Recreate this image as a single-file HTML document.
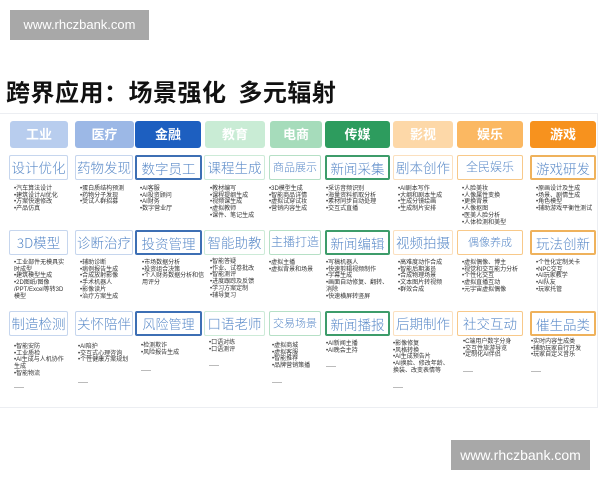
<!DOCTYPE html>
<html><head><meta charset="utf-8"><style>
*{margin:0;padding:0;box-sizing:border-box}
body{width:600px;height:480px;background:#fff;position:relative;overflow:hidden;font-family:"Liberation Sans","Noto Sans CJK SC",sans-serif}
.wm{position:absolute;background:#a8a8a8;color:#fff;font-size:13px;text-align:center;line-height:30px}
.title{position:absolute;left:6px;top:73px;font-size:24px;font-weight:bold;color:#111;letter-spacing:0.5px;font-family:"Noto Sans CJK SC",sans-serif}
.panel{position:absolute;left:0;top:113px;width:598px;height:295px;border:1px solid #eceef2;border-left:none}
.h{position:absolute;top:121px;height:27px;border-radius:3px;color:#fff;font-size:13px;font-weight:bold;text-align:center;line-height:27px}
.b{position:absolute;height:25px;border:1.5px solid;background:#fff;text-align:center;font-size:13.5px;line-height:22px;color:#5a8ac8;white-space:nowrap;overflow:hidden;border-radius:2px;font-family:"Noto Sans CJK SC",sans-serif;font-weight:300}
.l{position:absolute;font-size:6px;line-height:6.7px;color:#333;white-space:nowrap}
.d{display:block;width:10px;height:1px;background:#bbb;margin-top:9px}
</style></head><body>
<div class="wm" style="left:10px;top:10px;width:139px;height:30px">www.rhczbank.com</div>
<div class="wm" style="left:451px;top:440px;width:139px;height:30px;font-size:14px">www.rhczbank.com</div>
<div class="title">跨界应用：场景强化&nbsp; 多元辐射</div>
<div class="panel"></div>

<div class="h" style="left:10px;width:58px;background:#b8cdee">工业</div>
<div class="h" style="left:75px;width:59px;background:#9cb8e6">医疗</div>
<div class="h" style="left:135px;width:66px;background:#1d5fc0">金融</div>
<div class="h" style="left:205px;width:60px;background:#c9ecd5">教育</div>
<div class="h" style="left:270px;width:52px;background:#a6dcbb">电商</div>
<div class="h" style="left:325px;width:65px;background:#2d9c5e">传媒</div>
<div class="h" style="left:393px;width:60px;background:#fdd8a8">影视</div>
<div class="h" style="left:457px;width:66px;background:#fbb862">娱乐</div>
<div class="h" style="left:530px;width:66px;background:#f7921e">游戏</div>

<!-- row1 -->
<div class="b" style="left:9px;top:155px;width:59px;border-color:#c6d6ee">设计优化</div>
<div class="b" style="left:75px;top:155px;width:58px;border-color:#c6d6ee">药物发现</div>
<div class="b" style="left:135px;top:155px;width:67px;border-color:#3d6fb4;border-width:2px">数字员工</div>
<div class="b" style="left:204px;top:155px;width:61px;border-color:#cdebd8">课程生成</div>
<div class="b" style="left:269px;top:155px;width:52px;border-color:#b6e0c6;font-size:11px">商品展示</div>
<div class="b" style="left:325px;top:155px;width:65px;border-color:#3d9c6a;border-width:2px">新闻采集</div>
<div class="b" style="left:393px;top:155px;width:60px;border-color:#fbe0bf">剧本创作</div>
<div class="b" style="left:457px;top:155px;width:66px;border-color:#f8c98a;font-size:12px">全民娱乐</div>
<div class="b" style="left:530px;top:155px;width:66px;border-color:#efb25c;border-width:2px">游戏研发</div>

<div class="l" style="left:14px;top:186px">•汽车算法设计<br>•建筑设计AI优化<br>•方案快速修改<br>•产品仿真</div>
<div class="l" style="left:80px;top:186px">•蛋白质结构预测<br>•药物分子发现<br>•受试人群招募</div>
<div class="l" style="left:140px;top:186px">•AI客服<br>•AI投资顾问<br>•AI财务<br>•数字营业厅</div>
<div class="l" style="left:210px;top:186px">•教材编写<br>•课程提纲生成<br>•视频课生成<br>•虚拟教师<br>•课件、笔记生成</div>
<div class="l" style="left:269px;top:186px">•3D模型生成<br>•智能商品详情<br>•虚拟试穿试妆<br>•营销内容生成</div>
<div class="l" style="left:326px;top:186px">•采访音频识别<br>•海量资料抓取分析<br>•素材同步自动处理<br>•交互式直播</div>
<div class="l" style="left:398px;top:186px">•AI剧本写作<br>•大纲和剧本生成<br>•生成分镜绘画<br>•生成制片安排</div>
<div class="l" style="left:462px;top:186px">•人脸美妆<br>•人像属性变换<br>•更换背景<br>•人像抠图<br>•医美人脸分析<br>•人体检测和美型</div>
<div class="l" style="left:536px;top:186px">•原画设计及生成<br>•场景、剧情生成<br>•角色模型<br>•辅助游戏平衡性测试</div>

<!-- row2 -->
<div class="b" style="left:9px;top:230px;width:59px;border-color:#c6d6ee">3D模型</div>
<div class="b" style="left:75px;top:230px;width:58px;border-color:#c6d6ee">诊断治疗</div>
<div class="b" style="left:135px;top:230px;width:67px;border-color:#3d6fb4;border-width:2px">投资管理</div>
<div class="b" style="left:204px;top:230px;width:61px;border-color:#cdebd8">智能助教</div>
<div class="b" style="left:269px;top:230px;width:52px;border-color:#b6e0c6;font-size:12px">主播打造</div>
<div class="b" style="left:325px;top:230px;width:65px;border-color:#3d9c6a;border-width:2px">新闻编辑</div>
<div class="b" style="left:393px;top:230px;width:60px;border-color:#fbe0bf">视频拍摄</div>
<div class="b" style="left:457px;top:230px;width:66px;border-color:#f8c98a;font-size:11px">偶像养成</div>
<div class="b" style="left:530px;top:230px;width:66px;border-color:#efb25c;border-width:2px">玩法创新</div>

<div class="l" style="left:14px;top:260px">•工业部件无模具实<br>时成型<br>•建筑模型生成<br>•2D图纸/图像<br>/PPT/Excel等转3D<br>模型</div>
<div class="l" style="left:80px;top:260px">•辅助诊断<br>•病例报告生成<br>•合成放射影像<br>•手术机器人<br>•影像读片<br>•治疗方案生成</div>
<div class="l" style="left:142px;top:260px">•市场数据分析<br>•投资组合决策<br>•个人财务数据分析和信<br>用评分</div>
<div class="l" style="left:210px;top:259px">•智能答疑<br>•作业、试卷批改<br>•智能测评<br>•进度跟踪及反馈<br>•学习方案定制<br>•辅导复习</div>
<div class="l" style="left:269px;top:260px">•虚拟主播<br>•虚拟背景和场景</div>
<div class="l" style="left:326px;top:260px">•写稿机器人<br>•快速剪辑视频制作<br>•字幕生成<br>•画面自动修复、翻转、<br>消除<br>•快速横屏转竖屏</div>
<div class="l" style="left:398px;top:260px">•高难度动作合成<br>•智能后期演员<br>•合成物理场景<br>•文本图片转视频<br>•群效合成</div>
<div class="l" style="left:462px;top:260px">•虚拟偶像、博主<br>•视觉和交互能力分析<br>•个性化交互<br>•虚拟直播互动<br>•元宇宙虚拟偶像</div>
<div class="l" style="left:536px;top:260px">•个性化定制关卡<br>•NPC交互<br>•AI玩家教学<br>•AI队友<br>•玩家托管</div>

<!-- row3 -->
<div class="b" style="left:9px;top:311px;width:59px;border-color:#c6d6ee">制造检测</div>
<div class="b" style="left:75px;top:311px;width:58px;border-color:#c6d6ee">关怀陪伴</div>
<div class="b" style="left:135px;top:311px;width:67px;border-color:#3d6fb4;border-width:2px;font-size:13px">风险管理</div>
<div class="b" style="left:204px;top:311px;width:61px;border-color:#cdebd8">口语老师</div>
<div class="b" style="left:269px;top:311px;width:52px;border-color:#b6e0c6;font-size:11px">交易场景</div>
<div class="b" style="left:325px;top:311px;width:65px;border-color:#3d9c6a;border-width:2px">新闻播报</div>
<div class="b" style="left:393px;top:311px;width:60px;border-color:#fbe0bf">后期制作</div>
<div class="b" style="left:457px;top:311px;width:66px;border-color:#f8c98a">社交互动</div>
<div class="b" style="left:530px;top:311px;width:66px;border-color:#efb25c;border-width:2px">催生品类</div>

<div class="l" style="left:14px;top:344px">•智能安防<br>•工业质检<br>•AI生成与人机协作<br>生成<br>•智能物流<span class="d"></span></div>
<div class="l" style="left:78px;top:344px">•AI陪护<br>•交互式心理咨询<br>•个性健康方案规划<span class="d" style="margin-top:18px"></span></div>
<div class="l" style="left:141px;top:343px">•检测欺诈<br>•风险报告生成<span class="d" style="margin-top:14px"></span></div>
<div class="l" style="left:209px;top:340px">•口语对练<br>•口语测评<span class="d" style="margin-top:12px"></span></div>
<div class="l" style="left:272px;top:343px">•虚拟商城<br>•虚拟客服<br>•智能推荐<br>•品牌营销策播<span class="d" style="margin-top:12px"></span></div>
<div class="l" style="left:326px;top:341px">•AI新闻主播<br>•AI晚会主持<span class="d" style="margin-top:12px"></span></div>
<div class="l" style="left:393px;top:341px">•影像修复<br>•风格转换<br>•AI生成预告片<br>•AI换脸、修改年龄、<br>换装、改变表情等<span class="d" style="margin-top:12px"></span></div>
<div class="l" style="left:463px;top:339px">•C端用户数字分身<br>•交互性旅游导览<br>•定制化AI伴侣<span class="d" style="margin-top:12px"></span></div>
<div class="l" style="left:531px;top:339px">•实时内容生成类<br>•辅助玩家自行开发<br>•玩家自定义音乐<span class="d" style="margin-top:12px"></span></div>
</body></html>
